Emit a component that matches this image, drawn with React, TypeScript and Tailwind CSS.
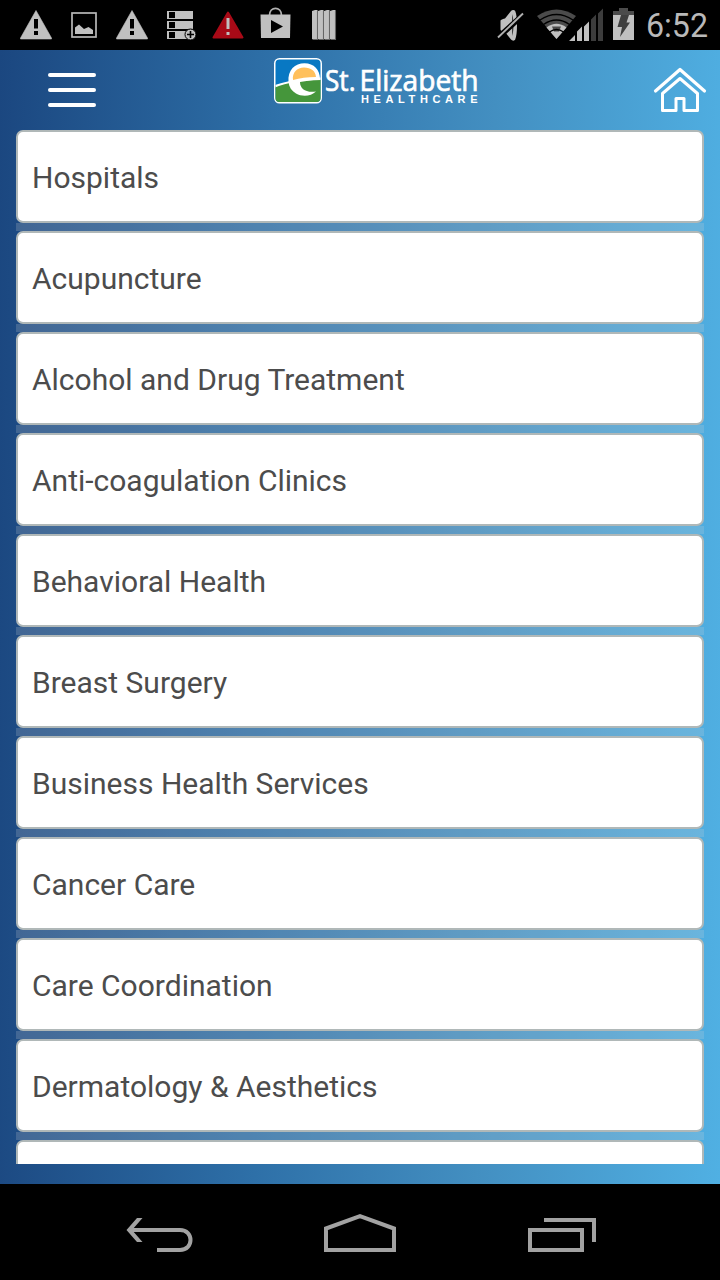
const SERVICES = [
  "Hospitals",
  "Acupuncture",
  "Alcohol and Drug Treatment",
  "Anti-coagulation Clinics",
  "Behavioral Health",
  "Breast Surgery",
  "Business Health Services",
  "Cancer Care",
  "Care Coordination",
  "Dermatology & Aesthetics",
  "",
];

function WarningIcon() {
  return (
    <svg width="32" height="50" viewBox="0 0 32 50" fill="#c0c0c0">
      <path d="M16 10.5 L31.5 38 V39 H0.5 V38 Z" stroke="#c0c0c0" strokeWidth="0.6" strokeLinejoin="round" />
      <path d="M14 19h4v9.5h-4zM14 31h4v4h-4z" fill="#000" />
    </svg>
  );
}

function AlertIcon() {
  return (
    <svg width="32" height="50" viewBox="0 0 32 50">
      <path d="M16 12.5 L30.5 37.5 H1.5 Z" fill="#a80a17" stroke="#a80a17" strokeWidth="2" strokeLinejoin="round" />
      <path d="M14.5 18h3v11h-3zM14.5 32h3v3h-3z" fill="#c0c0c0" />
    </svg>
  );
}

function PictureIcon() {
  return (
    <svg width="26" height="50" viewBox="0 0 26 50">
      <rect x="1" y="13" width="24" height="24" fill="none" stroke="#b8b8b8" strokeWidth="1.7" />
      <path d="M4 34v-6.5l4-3 5 4.5 4.5-2 4.5 3v4z" fill="#c0c0c0" />
    </svg>
  );
}

function ServerIcon() {
  return (
    <svg width="30" height="50" viewBox="0 0 30 50">
      {[11, 21, 31].map((y) => (
        <g key={y}>
          <rect y={y} width="26" height="8" fill="#c0c0c0" />
          <rect x="2" y={y + 1} width="6" height="6" fill="#000" />
        </g>
      ))}
      <circle cx="23.5" cy="34.5" r="5.5" fill="#c0c0c0" stroke="#000" strokeWidth="1" />
      <path d="M23.5 31v7M20 34.5h7" stroke="#000" strokeWidth="1.6" />
    </svg>
  );
}

function BagIcon() {
  return (
    <svg width="32" height="50" viewBox="0 0 32 50">
      <path d="M9.5 15.5C9.5 6 21.5 6 21.5 15.5" fill="none" stroke="#b0b0b0" strokeWidth="1.8" />
      <path d="M0.5 14.5h30L30 38H1z" fill="#c0c0c0" />
      <path d="M11 20l12 6.5-12 6.5z" fill="#000" />
    </svg>
  );
}

function ColumnsIcon() {
  return (
    <svg width="26" height="50" viewBox="0 0 26 50">
      {[0, 6, 12, 18].map((x) => (
        <g key={x}>
          <path d={`M${x} 11l3-1h2.5V39H${x}z`} fill="#c0c0c0" />
          <path d={`M${x + 5.5} 11v28.5h-5`} fill="none" stroke="#666" strokeWidth="1.1" />
        </g>
      ))}
    </svg>
  );
}

function MutedIcon() {
  return (
    <svg width="28" height="50" viewBox="0 0 28 50">
      <path d="M3.5 20.5c1-1.5 3-1.5 4.5-2l6-7.5c1-1.2 3.5-1.2 4.2 0 1.4 3 1.8 8.500 1.8 14.500s-.6 11-1.800 14c-.7 1.500-3 1.500-4.200 0L8 32c-2-.5-4.500-1-4.500-2.500z" fill="#c0c0c0" />
      <path d="M15.300 14c1.400 5 1.400 17 0 22z" fill="#000" />
      <path d="M1 37.500L26.500 14.500" stroke="#000" strokeWidth="5.500" />
      <path d="M1 37.500L26 13.500" stroke="#b0b0b0" strokeWidth="1.900" />
    </svg>
  );
}

function WifiIcon() {
  return (
    <svg width="32" height="50" viewBox="0 0 32 50" className="overflow-visible">
      <path d="M0 16Q19.5 3 39 16L19.5 39Z" fill="#4b4b4b" />
      <path d="M9.500 27.500Q19.500 20 29.500 27.500L19.500 39Z" fill="#c0c0c0" />
      <path d="M15 26.500h9l-2 5h-5z" fill="#4b4b4b" />
      <path d="M3 20Q19.500 9 36 20M6.500 24.500Q19.500 15.500 32.500 24.500M12.500 32Q19.500 27 26.500 32" fill="none" stroke="#000" strokeWidth="1.400" />
    </svg>
  );
}

function SignalIcon() {
  return (
    <svg width="35" height="50" viewBox="0 0 35 50">
      <path d="M0 41l6-6v6zM8 41V31.5l5-5V41zM15 41V26.5l5-5V41z" fill="#c0c0c0" />
      <path d="M22 41V19.5l5-5V41zM29 41V13.5l5-5V41z" fill="#3c3c3c" />
    </svg>
  );
}

function BatteryIcon() {
  return (
    <svg width="21" height="50" viewBox="0 0 21 50">
      <path d="M0 11h6V8h9v3h6v4H0z" fill="#4b4b4b" />
      <path d="M0 15h21v25H0z" fill="#c0c0c0" />
      <path d="M8 15h8l-2.5 7.5H17L7 37l2-10H4.5z" fill="#3e3e3e" />
    </svg>
  );
}

function StatusBar() {
  return (
    <div className="flex h-[50px] shrink-0 items-center bg-black pl-5">
      <div className="flex items-center">
        <WarningIcon />
        <div className="ml-[19px]"><PictureIcon /></div>
        <div className="ml-[19px]"><WarningIcon /></div>
        <div className="ml-[19px]"><ServerIcon /></div>
        <div className="ml-[15px]"><AlertIcon /></div>
        <div className="ml-4"><BagIcon /></div>
        <div className="ml-5"><ColumnsIcon /></div>
      </div>
      <div className="ml-auto flex items-center">
        <MutedIcon />
        <div className="ml-3"><WifiIcon /></div>
        <SignalIcon />
        <div className="ml-[9px]"><BatteryIcon /></div>
        <svg width="74" height="50" viewBox="0 0 74 50" className="ml-3">
          <text x="0" y="37" textLength="62" lengthAdjust="spacingAndGlyphs" className="fill-[#b9b9b9] font-['Roboto',sans-serif] text-[33px]">
            6:52
          </text>
        </svg>
      </div>
    </div>
  );
}

function LogoBadge() {
  return (
    <svg width="50" height="50" viewBox="273 56 50 50" className="block">
      <clipPath id="badge">
        <rect x="275.5" y="59.5" width="45" height="42.500" rx="4" />
      </clipPath>
      <rect x="274" y="58" width="48" height="45.500" rx="5.500" fill="#fff" />
      <g clipPath="url(#badge)">
        <path d="M274 57h48v46h-48z" fill="#0878c3" />
        <path d="M274 86.500C286 81 300 79.500 322 79.500V104H274Z" fill="#45963b" />
        <path d="M274 85.500C284 81.500 302 78 322 77.500V80C303 80 286 82.500 274 88Z" fill="#fff" />
        {/* outer ring and tail of the "e" */}
        <path d="M288.500 82C287.500 70 295 63.300 304.500 63.300C314 63.300 320 70 320 79L300 82C300 89 306 93 316 91.500C311 96.500 302 97 296 93.500C291.500 91 289 87 288.500 82Z" fill="#fff" />
        <path d="M293 80C292 72.500 297 67.500 304 67.500C311 67.500 315.500 71 316 77C307 77.300 300 78 293 80Z" fill="#ffc05c" />
      </g>
    </svg>
  );
}

function Logo() {
  return (
    <div className="flex" role="img" aria-label="St. Elizabeth Healthcare">
      <LogoBadge />
      <svg width="160" height="50" viewBox="323 56 160 50" className="block overflow-visible">
        <g className="fill-white stroke-white stroke-[0.7] font-['Open_Sans',sans-serif] text-[29px]">
          <text x="325" y="91" textLength="30.5" lengthAdjust="spacingAndGlyphs">St.</text>
          <text x="359.5" y="91" textLength="119" lengthAdjust="spacingAndGlyphs">Elizabeth</text>
        </g>
        <text x="361" y="102.500" textLength="116.5" lengthAdjust="spacing" className="fill-white font-['Liberation_Sans',sans-serif] text-[11px] font-bold">
          HEALTHCARE
        </text>
      </svg>
    </div>
  );
}

function Header() {
  return (
    <header className="flex h-20 shrink-0 items-start pl-12">
      <button type="button" aria-label="Menu" className="mt-[23px] flex w-12 flex-col gap-[11px]">
        <span className="h-1 rounded-full bg-white" />
        <span className="h-1 rounded-full bg-white" />
        <span className="h-1 rounded-full bg-white" />
      </button>
      <div className="mt-1.5 ml-[177px]"><Logo /></div>
      <button type="button" aria-label="Home" className="mt-4 mr-[13px] ml-auto">
        <svg width="54" height="48" viewBox="653 66 54 48" fill="none" stroke="#fff" strokeLinecap="round" strokeLinejoin="round" className="block">
          <path d="M655.5 91L680 69.5L704.5 91" strokeWidth="3.2" />
          <path d="M662.5 93.5L680 78.5L697.5 93.5V110.5H684V98.5H676V110.5H662.5Z" strokeWidth="3" />
        </svg>
      </button>
    </header>
  );
}

function ServiceList() {
  return (
    <ul className="mx-4 flex h-[1034px] flex-col overflow-hidden">
      {SERVICES.map((name, i) => (
        <li key={i} className="shrink-0">
          {/* translucent strip between neighbouring rows */}
          {i > 0 && <div className="h-2 bg-[#d9d9d9]/20" />}
          <div className="flex h-[93px] items-center rounded-[7px] border-2 border-[#b0b8b8] bg-white pt-0.5 pl-3.5 text-[30px] text-[#4c4c4c]">
            {name}
          </div>
        </li>
      ))}
    </ul>
  );
}

function NavBar() {
  return (
    <nav className="flex h-24 shrink-0 items-start bg-black pl-[126px] text-[#a2a2a2]">
      <svg width="68" height="96" viewBox="126 1184 68 96" fill="none" stroke="currentColor" strokeWidth="4">
        <path d="M131 1230H180C194 1230 194 1250 180 1250H157" />
        <path d="M137 1218H142.5L132 1230L142.5 1242H137L126.5 1230Z" fill="currentColor" stroke="none" />
      </svg>
      <svg width="72" height="96" viewBox="324 1184 72 96" fill="none" stroke="currentColor" strokeWidth="4" className="ml-[130px]">
        <path d="M326 1250V1228.5L360 1216.2L394 1228.5V1250Z" />
      </svg>
      <svg width="68" height="96" viewBox="528 1184 68 96" fill="none" stroke="currentColor" strokeWidth="4" className="ml-[132px]">
        <path d="M530 1230H582V1250H530ZM544 1220H594V1242" />
      </svg>
    </nav>
  );
}

export default function App() {
  return (
    <div className="flex h-[1280px] w-[720px] flex-col overflow-hidden bg-black font-['Roboto',sans-serif]">
      <StatusBar />
      <main className="flex h-[1134px] flex-col bg-[linear-gradient(91deg,#1b4780_0%,#2e70a8_37%,#438fc1_67%,#50b0e3_100%)]">
        <Header />
        <ServiceList />
      </main>
      <NavBar />
    </div>
  );
}
